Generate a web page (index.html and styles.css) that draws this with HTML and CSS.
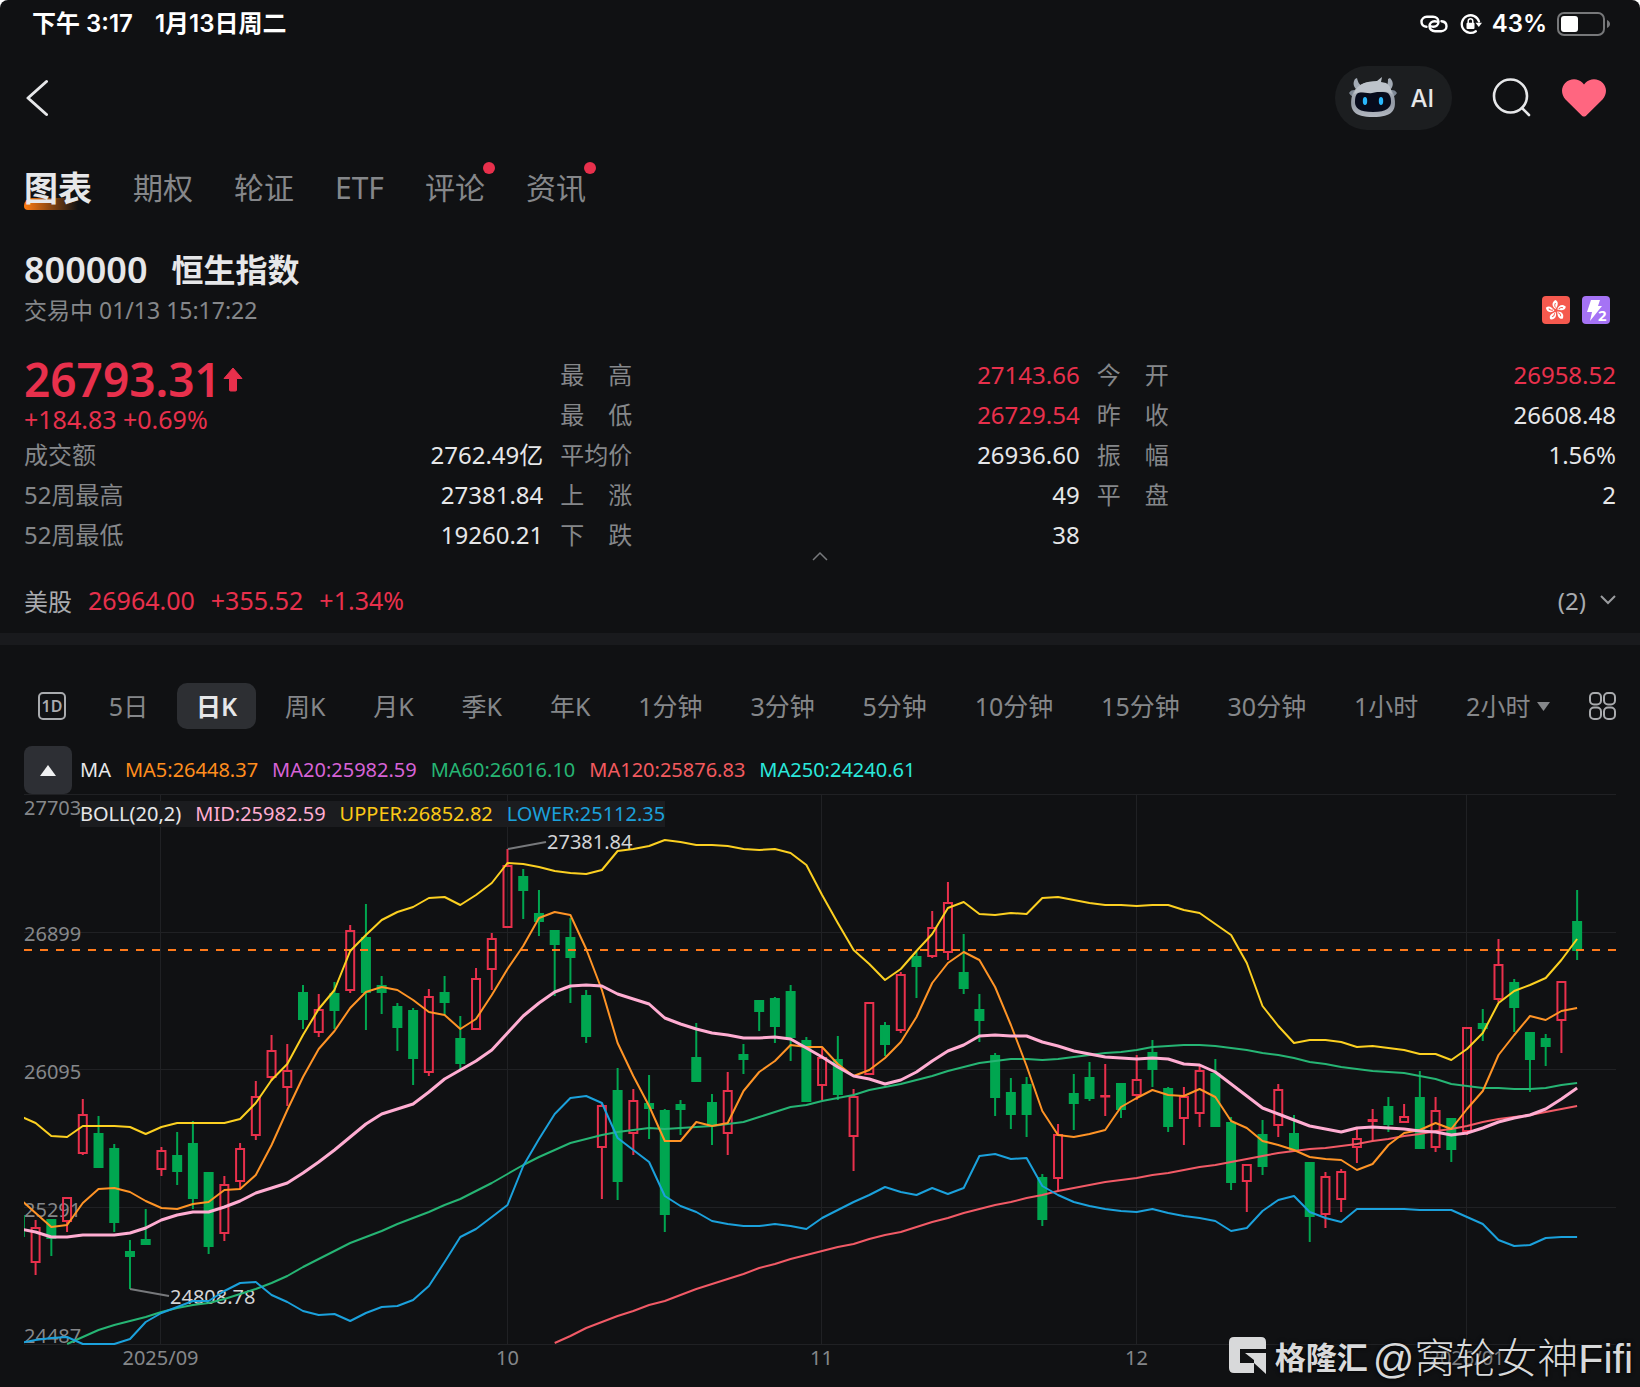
FILE: index.html
```html
<!DOCTYPE html>
<html lang="zh-CN">
<head>
    <meta charset="UTF-8">
    <meta name="viewport" content="width=device-width, initial-scale=1.0">
    <title>恒生指数 800000</title>
    <link rel="stylesheet" href="styles.css">
</head>
<body>
    <div class="screen">
        <div class="status-bar">
            <div class="status-left">
                <span>下午 3:17</span>
                <span>1月13日周二</span>
            </div>
            <div class="status-right">
                <svg class="icon-link" width="28" height="18" viewBox="0 0 28 18" fill="none" stroke="#fff" stroke-width="2.4" stroke-linecap="round">
                    <path d="M6.5 11.8C3.500 11.500 1.500 9.500 1.500 6.800C1.500 4 3.800 1.800 6.800 1.800H13C16.200 1.800 18.500 4 18.500 6.800C18.500 9.600 16.200 11.800 13.500 11.800C11.800 11.800 10.800 11.300 10.800 11.300"/>
                    <path d="M21.500 6.200C24.500 6.500 26.500 8.500 26.500 11.200C26.500 14 24.200 16.200 21.200 16.200H15C11.800 16.200 9.500 14 9.500 11.200C9.500 8.400 11.800 6.200 14.500 6.200C16.200 6.200 17.200 6.700 17.200 6.700"/>
                </svg>
                <svg class="icon-lock" width="22" height="22" viewBox="0 0 22 22" fill="none">
                    <path d="M15.800 18.200A8.800 8.800 0 1 1 19 8.500" stroke="#fff" stroke-width="2.300" stroke-linecap="round"/>
                    <path d="M15.500 9.800H22L18.800 14Z" fill="#fff"/>
                    <rect x="6.500" y="9.800" width="8" height="6.200" rx="1" fill="#fff"/>
                    <path d="M8.200 10V8a2.300 2.300 0 0 1 4.600 0v2" stroke="#fff" stroke-width="1.500"/>
                </svg>
                <span class="battery-value">43%</span>
                <svg width="54" height="24" viewBox="0 0 54 24">
                    <rect x="1" y="1" width="46" height="22" rx="6" fill="none" stroke="#77787a" stroke-width="2"/>
                    <rect x="4" y="4" width="17" height="16" rx="3" fill="#fff"/>
                    <path d="M50 8c4 1.500 4 6.500 0 8z" fill="#77787a"/>
                </svg>
            </div>
        </div>

        <header class="top-bar">
            <button class="icon-btn" aria-label="返回">
                <svg width="24" height="38" viewBox="0 0 24 38" fill="none" stroke="#e6e7e9" stroke-width="3" stroke-linecap="round" stroke-linejoin="round">
                    <path d="M22.500 2.500L4 19l18.500 16.500"/>
                </svg>
            </button>
            <div class="top-actions">
                <button class="ai-btn">
                    <svg width="48" height="42" viewBox="0 0 48 42">
                        <defs>
                            <linearGradient id="head" x1="0" y1="0" x2="0" y2="1">
                                <stop offset="0" stop-color="#b9bfc7"/>
                                <stop offset="0.600" stop-color="#9299a4"/>
                                <stop offset="1" stop-color="#b4b9c2"/>
                            </linearGradient>
                        </defs>
                        <path d="M6 2C4 5 4 9 7 12L14 9C10 8 9 5 8 1Z" fill="#a3abb5"/>
                        <path d="M41 1c3 3 4 7 1 11l-6-2c3-2 3-5 3-8z" fill="#a3abb5"/>
                        <path d="M0 16c3-4 6-3 9-2l-2 6c-3 0-5-1-7-4zM48 16c-3-4-6-3-9-2l2 6c3 0 5-1 7-4z" fill="#7d8794"/>
                        <path d="M24 5c13 0 20 7 21.500 16c2 12-2 19-21.500 19S.800 33 2.500 21C4 12 11 5 24 5z" fill="url(#head)"/>
                        <path d="M14 15h20c7 0 8 5 8 10s-4 10-18 10S6 31 6 25s1-10 8-10z" fill="#070b1c"/>
                        <path d="M5 17C8 7 17 4 28 4l5-4l-1 5l5 1c5 3 5 7 6 11c-7-4-14-2-20-1S12 13 5 17z" fill="#bdc3ca"/>
                        <ellipse cx="16" cy="24" rx="2.200" ry="4" fill="#29b8ff"/>
                        <ellipse cx="32" cy="24" rx="2.200" ry="4" fill="#29b8ff"/>
                    </svg>
                    <span>AI</span>
                </button>
                <button class="icon-btn" aria-label="搜索">
                    <svg width="40" height="40" viewBox="0 0 40 40" fill="none" stroke="#e6e7e9" stroke-width="2.600" stroke-linecap="round">
                        <circle cx="18.500" cy="18" r="16.500"/>
                        <path d="M30 30l7 7"/>
                    </svg>
                </button>
                <button class="icon-btn" aria-label="自选">
                    <svg width="44" height="38" viewBox="0 0 44 38">
                        <path d="M22 37.500c-1 0-1.800-.500-2.800-1.500L3.500 20.500C-1 15.500-1.200 8.500 3.200 4C8-1 16-1 20.500 3.800L22 5.500l1.500-1.700C28-1 36-1 40.800 4c4.400 4.500 4.200 11.500-.300 16.500L24.800 36c-1 1-1.800 1.500-2.800 1.500z" fill="#ff6680"/>
                    </svg>
                </button>
            </div>
        </header>

        <nav class="tabs">
            <a href="#" class="tab active">图表</a>
            <a href="#" class="tab">期权</a>
            <a href="#" class="tab">轮证</a>
            <a href="#" class="tab">ETF</a>
            <a href="#" class="tab has-dot">评论</a>
            <a href="#" class="tab has-dot">资讯</a>
        </nav>

        <section class="quote">
            <h1 class="quote-title"><span>800000</span><span>恒生指数</span></h1>
            <div class="quote-meta">
                <span>交易中 01/13 15:17:22</span>
                <div class="badges">
                    <svg width="28" height="28" viewBox="0 0 28 28">
                        <rect width="28" height="28" rx="4" fill="#f5594e"/>
                        <g id="flower" fill="#fff">
                            <path id="petal" d="M13.500 13C9.500 10.500 9.500 6 13.500 4C17 6 16 9.500 13.500 13z"/>
                            <use href="#petal" transform="rotate(72 14 14.500)"/>
                            <use href="#petal" transform="rotate(144 14 14.500)"/>
                            <use href="#petal" transform="rotate(216 14 14.500)"/>
                            <use href="#petal" transform="rotate(288 14 14.500)"/>
                        </g>
                        <g fill="none" stroke="#f5594e">
                            <path id="vein" d="M13.500 11.500c-1-1.500-1-3 0-4.500"/>
                            <use href="#vein" transform="rotate(72 14 14.500)"/>
                            <use href="#vein" transform="rotate(144 14 14.500)"/>
                            <use href="#vein" transform="rotate(216 14 14.500)"/>
                            <use href="#vein" transform="rotate(288 14 14.500)"/>
                        </g>
                    </svg>
                    <svg width="28" height="28" viewBox="0 0 28 28">
                        <rect width="28" height="28" rx="4" fill="#a573f5"/>
                        <path d="M9 4h9l-2 6h4L8 25l2-9H5z" fill="#fff"/>
                        <text class="badge-num" x="16" y="25">2</text>
                    </svg>
                </div>
            </div>

            <div class="stats">
                <div class="stats-col">
                    <div class="price">26793.31
                        <svg width="20" height="25" viewBox="0 0 20 25"><path d="M10 1l9 10.500h-5.500V23q0 1-1 1h-5q-1 0-1-1V11.500H1z" fill="#e8304c" stroke="#e8304c" stroke-linejoin="round"/></svg>
                    </div>
                    <div class="change">+184.83 +0.69%</div>
                    <dl>
                        <div class="row"><dt>成交额</dt><dd>2762.49亿</dd></div>
                        <div class="row"><dt>52周最高</dt><dd>27381.84</dd></div>
                        <div class="row"><dt>52周最低</dt><dd>19260.21</dd></div>
                    </dl>
                </div>
                <dl class="stats-col">
                    <div class="row"><dt>最　高</dt><dd class="up">27143.66</dd></div>
                    <div class="row"><dt>最　低</dt><dd class="up">26729.54</dd></div>
                    <div class="row"><dt>平均价</dt><dd>26936.60</dd></div>
                    <div class="row"><dt>上　涨</dt><dd>49</dd></div>
                    <div class="row"><dt>下　跌</dt><dd>38</dd></div>
                </dl>
                <dl class="stats-col">
                    <div class="row"><dt>今　开</dt><dd class="up">26958.52</dd></div>
                    <div class="row"><dt>昨　收</dt><dd>26608.48</dd></div>
                    <div class="row"><dt>振　幅</dt><dd>1.56%</dd></div>
                    <div class="row"><dt>平　盘</dt><dd>2</dd></div>
                </dl>
            </div>
            <button class="fold-btn" aria-label="收起">
                <svg width="16" height="10" viewBox="0 0 16 10" fill="none" stroke="#77797c" stroke-width="1.500"><path d="M1 9l7-7 7 7"/></svg>
            </button>
            <div class="us-row">
                <span class="us-label">美股</span>
                <span class="up">26964.00</span>
                <span class="up">+355.52</span>
                <span class="up">+1.34%</span>
                <button class="us-more">(2)
                    <svg width="16" height="10" viewBox="0 0 16 10" fill="none" stroke="#9a9c9f" stroke-width="2"><path d="M1 1l7 7 7-7"/></svg>
                </button>
            </div>
        </section>

        <div class="divider"></div>

        <div class="periods">
            <button class="period period-1d" aria-label="1D"><span>1D</span></button>
            <button class="period">5日</button>
            <button class="period active">日K</button>
            <button class="period">周K</button>
            <button class="period">月K</button>
            <button class="period">季K</button>
            <button class="period">年K</button>
            <button class="period">1分钟</button>
            <button class="period">3分钟</button>
            <button class="period">5分钟</button>
            <button class="period">10分钟</button>
            <button class="period">15分钟</button>
            <button class="period">30分钟</button>
            <button class="period">1小时</button>
            <label class="period period-select">
                <select aria-label="周期">
                    <option>2小时</option>
                    <option>3小时</option>
                    <option>4小时</option>
                </select>
                <svg width="13" height="9" viewBox="0 0 13 9"><path d="M0 0h13L6.500 9z" fill="#85878a"/></svg>
            </label>
            <button class="period period-grid" aria-label="更多">
                <svg width="27" height="28" viewBox="0 0 27 28" fill="none" stroke="#a9abae" stroke-width="2">
                    <rect x="1" y="1" width="11" height="11.500" rx="4"/>
                    <rect x="15" y="1" width="11" height="11.500" rx="4"/>
                    <rect x="1" y="15.500" width="11" height="11.500" rx="4"/>
                    <rect x="15" y="15.500" width="11" height="11.500" rx="4"/>
                </svg>
            </button>
        </div>

        <section class="chart">
            <div class="ma-row">
                <button class="collapse-btn" aria-label="收起指标">
                    <svg width="16" height="11" viewBox="0 0 16 11"><path d="M8 0l8 11H0z" fill="#f0f1f2"/></svg>
                </button>
                <div class="legend">
                    <span>MA</span>
                    <span class="c-ma5">MA5:26448.37</span>
                    <span class="c-ma20">MA20:25982.59</span>
                    <span class="c-ma60">MA60:26016.10</span>
                    <span class="c-ma120">MA120:25876.83</span>
                    <span class="c-ma250">MA250:24240.61</span>
                </div>
            </div>
            <div class="plot">
                <svg id="kline" viewBox="0 0 1592 593"></svg>
                <div class="legend boll">
                    <span>BOLL(20,2)</span>
                    <span class="c-mid">MID:25982.59</span>
                    <span class="c-upper">UPPER:26852.82</span>
                    <span class="c-lower">LOWER:25112.35</span>
                </div>
            </div>
            <div class="watermark">
                <svg width="37" height="37" viewBox="0 0 37 37" fill="#d8d9da">
                    <path d="M5 0h27q5 0 5 5v7H11v14h14v10H5q-5 0-5-5V5q0-5 5-5z"/>
                    <path d="M16 16h21v21L25 26v-3z"/>
                </svg>
                <span class="wm-brand">格隆汇</span>
                <span class="wm-user">@窝轮女神Fifi</span>
            </div>
        </section>
    </div>
    <script src="chart.js"></script>
</body>
</html>
```

FILE: styles.css
```css
* { margin: 0; padding: 0; box-sizing: border-box; }
html {
    background: #fff;
}
body {
    font-family: "Noto Sans", "Noto Sans CJK SC", sans-serif;
    font-size: 24px;
    color: #e6e7e9;
}
button, select {
    font: inherit;
    color: inherit;
    background: none;
    border: none;
    cursor: pointer;
}
svg {
    display: block;
}
.screen {
    min-height: 100vh;
    background: #101113;
    border-radius: 8px 8px 0 0;
    overflow: hidden;
}

/* 状态栏 */
.status-bar {
    display: flex;
    justify-content: space-between;
    align-items: center;
    height: 48px;
    padding: 0 29px 0 32px;
    font-family: Inter, "Noto Sans CJK SC", sans-serif;
    font-weight: 600;
    line-height: 28px;
    color: #fff;
}
.status-left {
    display: flex;
    gap: 22px;
}
.status-right {
    display: flex;
    align-items: center;
    gap: 10px;
}
.icon-link {
    margin-right: 2px;
}

/* 顶部导航 */
.top-bar {
    display: flex;
    justify-content: space-between;
    align-items: center;
    height: 100px;
    padding: 0 34px 0 24px;
}
.top-actions {
    display: flex;
    align-items: center;
    gap: 30px;
}
.ai-btn {
    display: flex;
    align-items: center;
    gap: 13px;
    height: 64px;
    padding: 0 18px 0 14px;
    margin-right: 10px;
    border-radius: 32px;
    background: #1c1e20;
    font-family: Inter, sans-serif;
    font-weight: 500;
}

/* 标签页 */
.tabs {
    display: flex;
    align-items: center;
    gap: 41px;
    height: 80px;
    padding: 0 24px;
}
.tab {
    position: relative;
    font-size: 30px;
    line-height: 40px;
    color: #85878a;
    text-decoration: none;
}
.tab.active {
    z-index: 0;
    font-size: 34px;
    font-weight: 700;
    color: #e6e7e9;
}
.tab.active::before {
    content: "";
    position: absolute;
    z-index: -1;
    left: 0;
    bottom: -2px;
    width: 54px;
    height: 12px;
    border-radius: 8px 0 0 4px;
    background: linear-gradient(to right, #ff7a0f, rgba(255, 122, 15, 0));
}
.tab.has-dot::after {
    content: "";
    position: absolute;
    top: -6px;
    right: -10px;
    width: 12px;
    height: 12px;
    border-radius: 50%;
    background: #e8304c;
}

/* 报价 */
.quote {
    padding: 20px 24px 0;
}
.quote-title {
    display: flex;
    gap: 24px;
    font-size: 32px;
    line-height: 44px;
    font-weight: 600;
}
.quote-title span:first-child {
    font-size: 36px;
}
.quote-meta {
    display: flex;
    justify-content: space-between;
    align-items: center;
    font-size: 23px;
    line-height: 36px;
    padding-right: 6px;
    color: #85878a;
}
.badges {
    display: flex;
    gap: 12px;
}
.badge-num {
    font-size: 15px;
    font-weight: 700;
    fill: #fff;
}
.stats {
    display: grid;
    grid-template-columns: repeat(3, 1fr);
    gap: 17px;
    margin-top: 27px;
}
.row {
    display: flex;
    justify-content: space-between;
    line-height: 40px;
}
.row dt {
    color: #85878a;
}
.price {
    display: flex;
    align-items: center;
    gap: 2px;
    font-size: 46px;
    font-weight: 600;
    line-height: 48px;
    color: #e8304c;
}
.change {
    font-size: 25px;
    line-height: 32px;
    color: #e8304c;
}
.up {
    color: #e8304c;
}
.fold-btn {
    display: flex;
    justify-content: center;
    align-items: center;
    width: 60px;
    height: 18px;
    margin: -8px auto 0;
}
.us-row {
    display: flex;
    align-items: center;
    gap: 16px;
    height: 66px;
    margin-top: 2px;
}
.us-label {
    color: #a9abae;
}
.us-row .up {
    font-size: 25px;
}
.us-more {
    display: flex;
    align-items: center;
    gap: 14px;
    margin-left: auto;
    color: #a9abae;
}
.divider {
    height: 12px;
    background: #191a1d;
}

/* 周期切换 */
.periods {
    display: flex;
    justify-content: space-between;
    align-items: center;
    margin-top: 38px;
    padding: 0 24px;
}
.period {
    height: 46px;
    padding: 0 19px;
    border-radius: 10px;
    font-size: 25px;
    line-height: 46px;
    white-space: nowrap;
    color: #85878a;
}
.period.active {
    background: #2d2f33;
    color: #e6e7e9;
    font-weight: 600;
}
.period-1d {
    padding: 0 14px;
}
.period-1d span {
    display: block;
    width: 28px;
    border: 2px solid #a9abae;
    border-radius: 5px;
    font-size: 16px;
    font-weight: 600;
    line-height: 24px;
    color: #a9abae;
}
.period-select {
    display: flex;
    align-items: center;
    gap: 6px;
}
.period-select select {
    appearance: none;
}
.period-grid {
    padding: 0 0 0 10px;
}

/* 图表 */
.chart {
    position: relative;
    margin-top: 17px;
    padding: 0 24px;
}
.ma-row {
    display: flex;
    align-items: center;
    gap: 8px;
}
.collapse-btn {
    display: flex;
    justify-content: center;
    align-items: center;
    width: 48px;
    height: 48px;
    border-radius: 8px;
    background: #2d2f34;
}
.legend {
    display: flex;
    gap: 14px;
    font-size: 20px;
    line-height: 26px;
    white-space: nowrap;
}
.plot {
    position: relative;
}
.plot svg {
    width: 100%;
    height: auto;
}
.boll {
    position: absolute;
    top: 7px;
    left: 56px;
    background: #1b1c1f;
}
.c-ma5 { color: #ff8d1e; }
.c-ma20 { color: #d763d7; }
.c-ma60 { color: #26b574; }
.c-ma120 { color: #f25a5f; }
.c-ma250 { color: #2be8dc; }
.c-mid { color: #ffadd2; }
.c-upper { color: #fcc917; }
.c-lower { color: #1ba1dc; }

.grid-line { stroke: #202124; }
.axis-text { fill: #85878a; font-size: 20px; }
.mark-text { fill: #d3d4d6; font-size: 20px; }
.mark-line { stroke: #77797c; stroke-width: 2; }
.price-line { stroke: #ff7a1a; stroke-width: 2; stroke-dasharray: 8 8; }
.candle-up { fill: none; stroke: #e8304c; stroke-width: 2; }
.candle-down { fill: #00a650; stroke: #00a650; stroke-width: 2; }
.line { fill: none; stroke-width: 2; stroke-linejoin: round; }
.line-mid { stroke-width: 3; }

.watermark {
    position: absolute;
    right: 7px;
    bottom: 0;
    display: flex;
    align-items: center;
    height: 64px;
    color: #d8d9da;
    text-shadow: 0 0 4px #000;
    white-space: nowrap;
}
.wm-brand {
    margin: 0 5px 0 9px;
    font-size: 31px;
    font-weight: 700;
}
.wm-user {
    font-family: "Liberation Sans", "Noto Sans CJK SC", sans-serif;
    font-size: 41px;
    font-weight: 300;
}
```

FILE: chart.js
```js
const NS = 'http://www.w3.org/2000/svg';
const svg = document.getElementById('kline');
const STEP = 15.73;
const X0 = 11.6;
const PLOT_W = 1592;
const PLOT_H = 550;

// [涨1/跌0, 最高, 实体上沿, 实体下沿, 最低]
const candles = [
    [0,421,421,443,443],[1,426,433,469,481],[0,425,425,445,462],[1,403,403,428,438],[1,305,320,360,361],
    [0,322,339,374,374],[0,350,354,429,438],[0,446,457,463,495],[0,415,445,451,451],[1,353,356,376,382],
    [0,338,361,378,391],[0,327,349,405,415],[0,378,378,453,460],[1,382,390,440,447],[1,349,354,388,395],
    [1,287,302,342,346],[1,241,256,284,287],[1,250,276,294,312],[0,191,198,226,235],[1,200,215,239,243],
    [0,188,199,217,235],[1,131,136,197,199],[0,110,143,199,236],[0,182,191,199,220],[0,209,212,234,257],
    [0,214,216,265,291],[1,195,202,279,282],[0,182,198,209,221],[0,222,244,270,276],[1,174,184,236,236],
    [1,139,144,176,196],[1,55,71,134,134],[0,75,82,97,125],[0,96,119,128,142],[0,136,136,151,202],
    [0,124,143,164,209],[0,196,201,243,249],[1,310,311,354,405],[0,274,296,388,406],[1,295,306,340,361],
    [0,281,309,315,345],[0,315,316,421,438],[0,306,310,316,341],[0,229,263,288,288],[0,300,308,332,351],
    [1,278,296,340,361],[0,250,260,266,280],[0,206,206,218,237],[0,203,204,233,249],[0,191,197,244,267],
    [0,243,246,308,308],[1,254,263,292,306],[0,242,265,301,306],[1,295,302,343,377],[1,208,208,281,281],
    [0,228,231,251,262],[1,178,180,237,239],[0,158,162,173,204],[1,117,133,163,164],[1,88,108,159,166],
    [0,140,178,195,200],[0,200,215,227,248],[0,259,261,304,322],[0,284,298,321,335],[0,283,290,321,343],
    [0,380,383,426,432],[1,330,340,385,398],[0,280,299,310,336],[0,268,283,305,307],[1,270,301,303,322],
    [0,289,289,316,324],[1,261,285,302,306],[0,246,258,276,293],[0,293,294,333,338],[1,293,302,325,351],
    [1,270,276,320,333],[0,265,279,333,333],[0,323,328,389,396],[1,370,370,388,418],[0,326,340,373,381],
    [1,290,295,332,343],[0,321,339,357,357],[0,368,368,423,448],[1,378,382,421,434],[1,375,377,406,418],
    [1,334,344,354,369],[1,315,325,328,347],[0,303,312,331,338],[1,310,322,329,329],[0,277,303,355,355],
    [1,303,316,354,358],[0,324,324,356,368],[1,233,233,338,341],[0,215,229,235,247],[1,145,170,206,208],
    [0,185,188,214,238],[0,238,238,266,298],[0,240,244,253,272],[1,187,187,227,259],[0,96,127,157,166]
];

const lines = [
    { color: '#f25a66', from: 33, data: [549,542,534,528,522,517,511,507,501,495,490,485,480,474,470,465,461,457,453,450,445,441,438,433,428,424,419,415,411,408,404,401,397,394,391,388,386,384,381,379,376,373,371,368,365,362,359,357,355,354,352,350,347,345,342,340,337,335,332,328,325,323,321,318,315,312] },
    { color: '#26b574', from: 2, data: [550,543,536,531,527,523,518,514,511,509,505,500,495,489,482,473,465,457,449,443,437,430,424,418,411,405,397,389,380,371,363,356,349,345,341,338,336,334,335,334,333,332,330,328,323,318,313,311,307,304,301,296,293,290,286,282,277,273,269,267,265,265,266,265,263,261,259,258,256,253,252,251,251,252,254,256,259,261,264,268,270,273,275,277,278,279,282,285,290,292,294,294,295,295,294,291,289] },
    { color: '#ff9426', from: -1, data: [405,419,433,431,409,395,394,398,407,414,415,410,408,396,395,381,351,316,283,255,237,214,198,193,196,206,218,221,235,225,201,175,152,124,118,121,155,196,249,282,312,347,347,328,332,329,297,278,267,251,253,253,270,282,276,264,248,223,189,169,158,166,193,231,272,317,341,343,340,336,313,304,296,301,302,295,303,327,334,347,351,356,363,365,366,376,370,351,339,336,329,335,315,297,261,241,222,226,217,214] },
    { color: '#1ba1dc', from: -1, data: [549,546,544,543,550,550,550,545,528,519,513,507,507,497,489,488,501,508,517,521,520,527,519,513,512,506,492,468,443,435,423,411,372,345,320,304,302,309,344,356,368,402,412,418,427,430,432,432,430,432,435,424,416,408,401,393,398,401,394,400,394,362,360,365,364,392,401,408,412,415,417,418,415,419,422,424,427,437,434,417,406,402,418,424,428,415,415,415,415,416,416,416,423,430,446,452,451,444,443,443] },
    { color: '#fcd021', from: -1, data: [322,329,342,343,332,332,332,333,340,333,329,329,329,329,325,309,286,270,241,215,196,157,141,126,118,113,104,103,111,101,89,69,70,73,77,79,80,76,57,55,52,46,48,51,51,52,55,56,55,59,71,101,129,156,170,186,175,157,140,114,108,120,121,119,120,104,103,106,109,111,111,112,111,111,116,119,130,141,169,212,232,249,246,246,248,253,252,254,256,260,260,266,255,239,209,197,191,184,166,145] },
    { color: '#ffadd2', cls: 'line-mid', from: -1, data: [435,438,443,443,441,441,441,439,434,426,421,418,418,413,407,399,394,389,379,368,356,343,330,320,315,310,298,285,276,267,256,239,222,209,198,192,191,192,200,205,210,224,230,235,239,241,244,244,243,245,254,263,273,282,285,290,286,278,267,257,251,242,241,242,242,248,252,257,260,263,264,265,264,265,270,271,278,290,302,314,320,326,332,335,338,334,333,334,335,337,338,341,339,334,328,324,321,315,305,294] }
];

function add(parent, tag, attrs, text) {
    const el = document.createElementNS(NS, tag);
    for (const key in attrs) el.setAttribute(key, attrs[key]);
    if (text) el.textContent = text;
    parent.appendChild(el);
    return el;
}

function xAt(i) {
    return X0 + i * STEP;
}

function drawGrid() {
    for (let i = 0; i <= 4; i++) {
        const y = Math.round(i * PLOT_H / 4) + 0.5;
        add(svg, 'line', { class: 'grid-line', x1: 0, x2: PLOT_W, y1: y, y2: y });
    }
    const months = [[8, '2025/09'], [30, '10'], [50, '11'], [70, '12'], [91, '2026/01']];
    months.forEach(([i, label]) => {
        const x = Math.round(xAt(i)) - 0.5;
        add(svg, 'line', { class: 'grid-line', x1: x, x2: x, y1: 0, y2: PLOT_H });
        add(svg, 'text', { class: 'axis-text', x: x, y: 571, 'text-anchor': 'middle' }, label);
    });
    const prices = [[21, '27703'], [147, '26899'], [285, '26095'], [423, '25291'], [549, '24487']];
    prices.forEach(([y, label]) => {
        add(svg, 'text', { class: 'axis-text', x: 0, y: y }, label);
    });
}

function drawCandles(g) {
    candles.forEach(([up, high, top, bottom, low], n) => {
        const x = xAt(n - 1);
        const cls = up ? 'candle-up' : 'candle-down';
        add(g, 'rect', { class: cls, x: x - 4, y: top + 1, width: 8, height: Math.max(bottom - top - 2, 0.5) });
        add(g, 'path', { class: cls, d: `M${x} ${high}V${top}M${x} ${bottom}V${low}` });
    });
}

function drawLines(g) {
    lines.forEach(line => {
        const points = line.data.map((y, n) => xAt(line.from + n).toFixed(1) + ',' + y).join(' ');
        add(g, 'polyline', { class: 'line ' + (line.cls || ''), stroke: line.color, points: points });
    });
}

function drawMarks() {
    add(svg, 'line', { class: 'mark-line', x1: 484, y1: 55, x2: 522, y2: 48 });
    add(svg, 'text', { class: 'mark-text', x: 523, y: 55 }, '27381.84');
    add(svg, 'line', { class: 'mark-line', x1: 106, y1: 495, x2: 145, y2: 502 });
    add(svg, 'text', { class: 'mark-text', x: 146, y: 510 }, '24808.78');
}

drawGrid();
const clip = add(add(svg, 'defs', {}), 'clipPath', { id: 'plotClip' });
add(clip, 'rect', { x: 0, y: 0, width: PLOT_W, height: PLOT_H + 1 });
const plot = add(svg, 'g', { 'clip-path': 'url(#plotClip)' });
drawCandles(plot);
drawMarks();
add(svg, 'line', { class: 'price-line', x1: 0, x2: PLOT_W, y1: 156, y2: 156 });
const overlay = add(svg, 'g', { 'clip-path': 'url(#plotClip)' });
drawLines(overlay);
```
